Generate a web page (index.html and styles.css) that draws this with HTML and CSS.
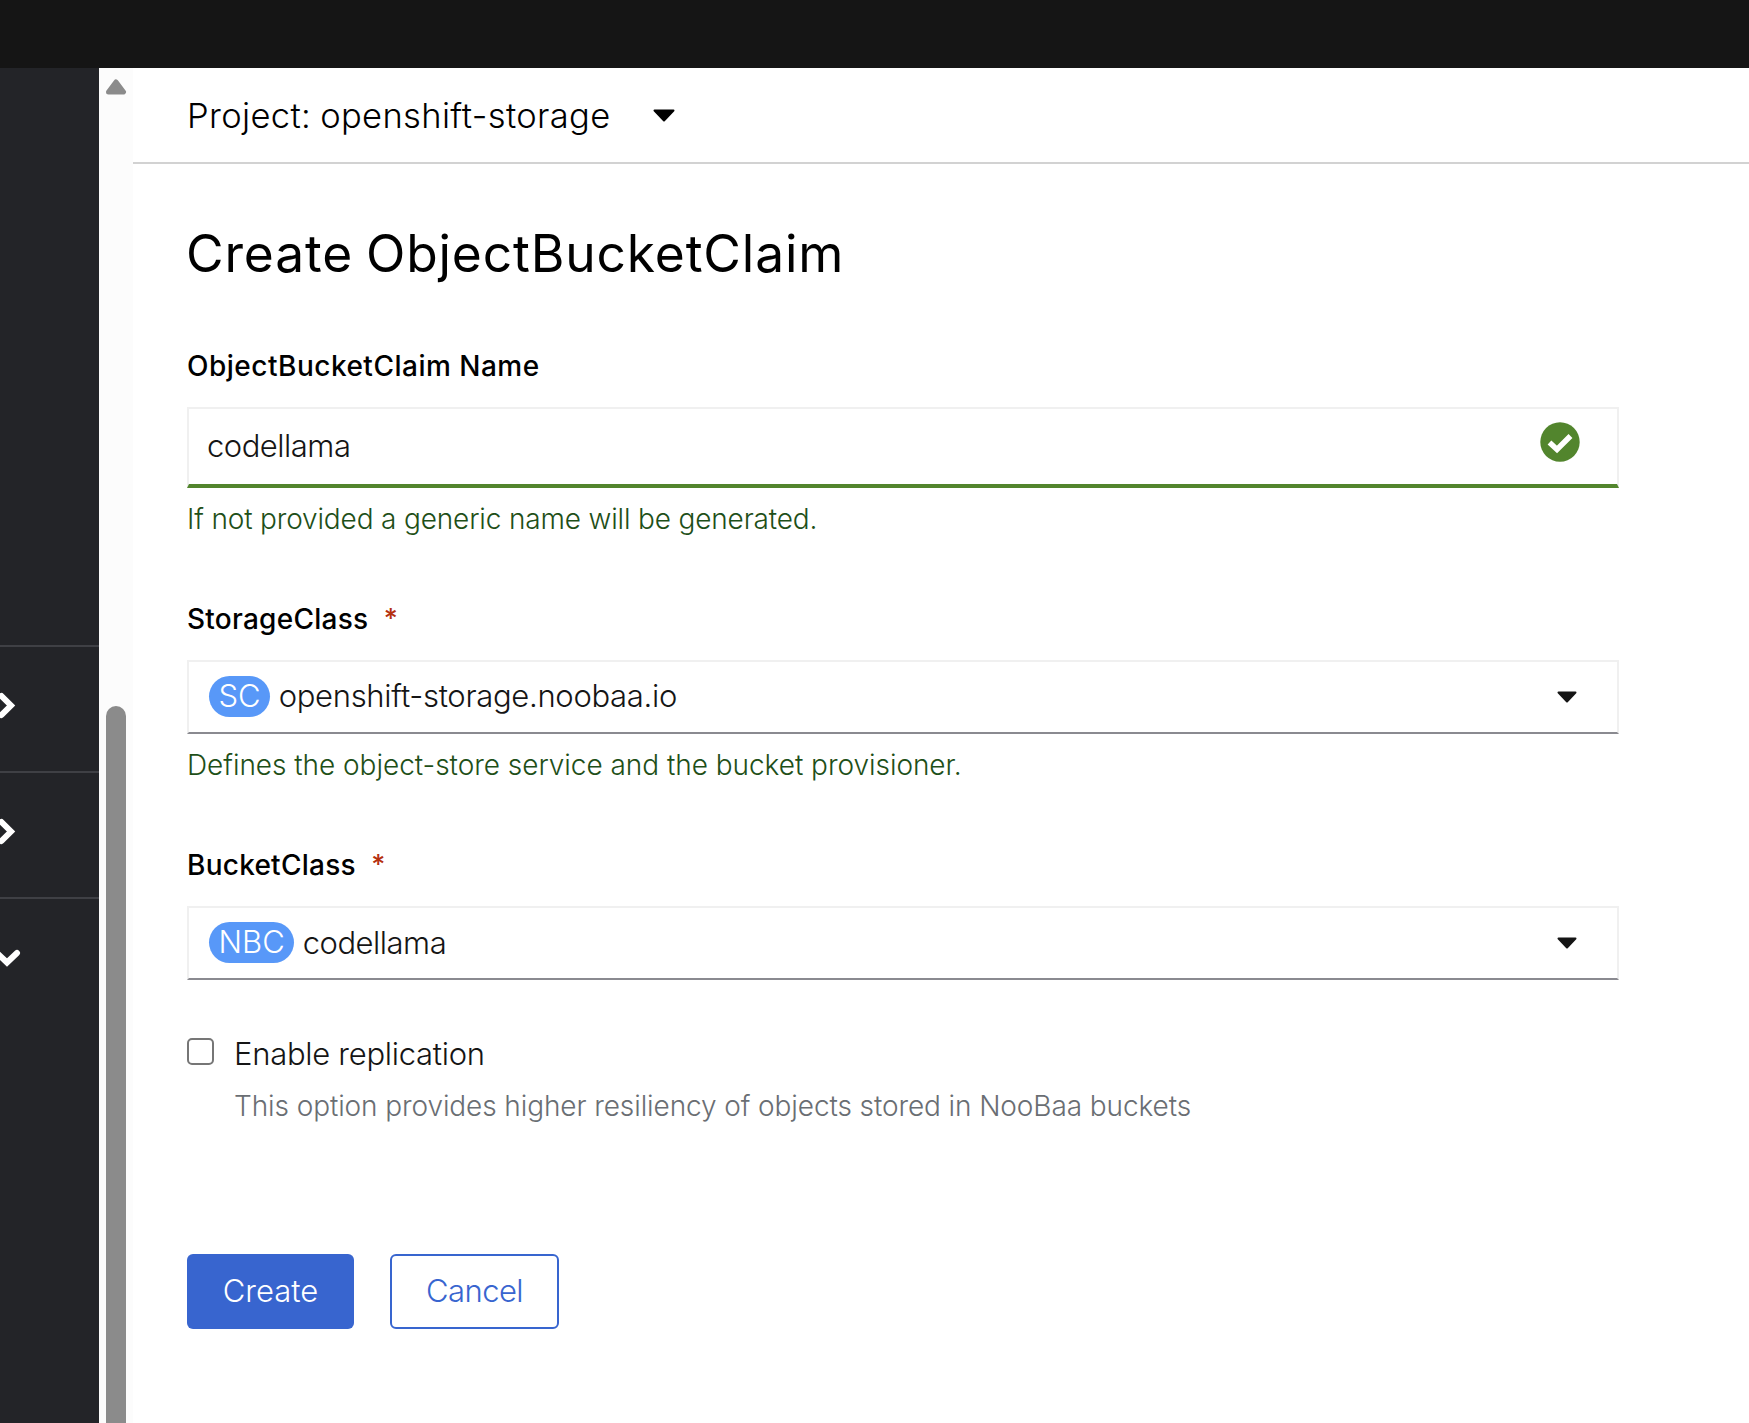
FILE: index.html
```html
<!DOCTYPE html>
<html lang="en">
<head>
<meta charset="utf-8">
<title>Create ObjectBucketClaim</title>
<link rel="stylesheet" href="styles.css">
</head>
<body>
<div class="masthead"></div>
<div class="shell">
  <nav class="sidebar">
    <div class="nav-spacer"></div>
    <div class="nav-item"><svg class="chevron" viewBox="0 0 22 32"><path d="M1.500 7 L11 16.500 L1.500 26"/></svg></div>
    <div class="nav-item"><svg class="chevron" viewBox="0 0 22 32"><path d="M1.500 7 L11 16.500 L1.500 26"/></svg></div>
    <div class="nav-item"><svg class="chevron" viewBox="0 0 22 32"><path d="M-3 12 L7 21.500 L17 12"/></svg></div>
  </nav>
  <div class="scrollbar">
    <svg class="scroll-up" viewBox="0 0 22 16"><path d="M11 3 L18.500 13 H3.500 Z"/></svg>
    <div class="thumb"></div>
  </div>
  <main class="main">
    <header class="project-bar">
      <span class="project">Project: openshift-storage</span>
      <svg class="caret-lg" viewBox="0 0 22 13"><path d="M1.500 1.500 H20.500 L11 11.500 Z"/></svg>
    </header>
    <form class="form">
      <h1 class="title">Create ObjectBucketClaim</h1>
      <div class="label label-wide">ObjectBucketClaim Name</div>
      <div class="input">
        <span class="value value-name">codellama</span>
        <svg class="check" viewBox="0 0 40 40"><circle cx="20" cy="20" r="19.700"/><path d="M9.500 20.500 L17 27.500 L30.500 14"/></svg>
      </div>
      <div class="helper helper-tight">If not provided a generic name will be generated.</div>
      <div class="label">StorageClass<span class="star">*</span></div>
      <div class="select">
        <span class="badge">SC</span><span class="value">openshift-storage.noobaa.io</span>
        <svg class="caret" viewBox="0 0 20 12"><path d="M1.500 1.500 H18.500 L10 10.500 Z"/></svg>
      </div>
      <div class="helper">Defines the object-store service and the bucket provisioner.</div>
      <div class="label">BucketClass<span class="star">*</span></div>
      <div class="select">
        <span class="badge">NBC</span><span class="value value-name">codellama</span>
        <svg class="caret" viewBox="0 0 20 12"><path d="M1.500 1.500 H18.500 L10 10.500 Z"/></svg>
      </div>
      <div class="check-row">
        <span class="box"></span>
        <div>
          <div class="check-label">Enable replication</div>
          <div class="desc">This option provides higher resiliency of objects stored in NooBaa buckets</div>
        </div>
      </div>
      <div class="actions">
        <div class="btn primary">Create</div>
        <div class="btn secondary">Cancel</div>
      </div>
    </form>
  </main>
</div>
</body>
</html>
```
FILE: styles.css
```css
* { box-sizing: border-box; }
body {
  margin: 0;
  height: 1423px;
  overflow: hidden;
  display: flex;
  flex-direction: column;
  background: #fff;
  color: #151515;
  font-family: Inter, "Open Sans", sans-serif;
  font-weight: 300;
}
svg { display: block; flex: none; }

/* Shell */
.masthead { height: 68px; flex: none; background: #151515; }
.shell { flex: 1; display: flex; min-height: 0; }
.sidebar { width: 99px; flex: none; background: #232428; overflow: hidden; }
.nav-spacer { height: 577px; }
.nav-item { height: 126px; border-top: 2px solid #3f4045; display: flex; align-items: flex-start; padding-top: 42px; }
.chevron { width: 22px; height: 32px; fill: none; stroke: #fff; stroke-width: 6; stroke-linecap: round; stroke-linejoin: miter; }
.scrollbar { width: 34px; flex: none; background: #fcfcfc; display: flex; flex-direction: column; align-items: center; padding-top: 11px; }
.scroll-up { width: 22px; height: 16px; fill: #8b8b8b; stroke: #8b8b8b; stroke-width: 5; stroke-linejoin: round; }
.thumb { width: 20px; flex: 1; margin-top: 611px; background: #8b8b8b; border-radius: 10px 10px 0 0; }
.main { flex: 1; min-width: 0; }

/* Project selector */
.project-bar { height: 96px; border-bottom: 2px solid #d2d2d2; padding-left: 54px; display: flex; align-items: center; color: #000; }
.project { font-size: 34.5px; letter-spacing: 0.35px; word-spacing: -1px; }
.caret-lg { width: 22px; height: 13px; margin-left: 42px; fill: #000; stroke: #000; stroke-width: 2; stroke-linejoin: round; }

/* Form */
.form { padding: 58px 130px 0 54px; }
.title { margin: 0 0 61px -1px; font-size: 51.5px; line-height: 62px; font-weight: 400; letter-spacing: 0.85px; word-spacing: -2.5px; color: #000; }
.label { display: flex; font-size: 28px; line-height: 42px; font-weight: 500; letter-spacing: 0.25px; color: #000; margin-bottom: 20px; }
.label-wide { letter-spacing: 0.5px; }
.star { margin-left: 15.5px; color: #b5300f; font-size: 27px; line-height: 42px; }
.input, .select { display: flex; align-items: center; border: 2px solid #f0f0f0; font-size: 31px; line-height: 44px; margin-bottom: 10px; }
.input { height: 81px; border-bottom: 4px solid #52852d; padding: 0 37px 2px 18px; justify-content: space-between; }
.select { height: 74px; border-bottom-color: #8a8a90; padding: 0 40px 0 20px; }
.value { letter-spacing: -0.31px; }
.value-name { letter-spacing: -0.5px; }
.select .value { margin-left: 8.5px; padding-bottom: 3px; }
.select .value-name { padding-bottom: 1px; }
.check { width: 40px; height: 40px; margin-top: -7px; }
.check circle { fill: #52852d; }
.check path { fill: none; stroke: #fff; stroke-width: 5.5; }
.caret { width: 20px; height: 12px; margin-left: auto; fill: #151515; stroke: #151515; stroke-width: 2; stroke-linejoin: round; }
.badge { height: 41px; margin-bottom: 1px; border-radius: 21px; background: #5898f8; color: #fff; padding: 0 9.5px; line-height: 39px; }
.helper { font-size: 28px; line-height: 42px; letter-spacing: -0.04px; color: #1e4f18; margin-bottom: 58px; }
.helper-tight { letter-spacing: -0.16px; }

/* Replication option */
.check-row { display: flex; margin-top: 50px; }
.box { width: 27px; height: 27px; margin: 8px 20px 0 0; border: 2px solid #767676; border-radius: 5px; }
.check-label { font-size: 31px; line-height: 48px; letter-spacing: -0.28px; }
.desc { font-size: 28px; line-height: 42px; letter-spacing: -0.1px; margin-top: 7px; color: #6a6e73; }

/* Actions */
.actions { display: flex; gap: 36px; margin-top: 127px; }
.btn { height: 75px; border-radius: 6px; font-size: 31px; line-height: 73px; text-align: center; }
.primary { width: 167px; background: #3865cf; color: #fff; }
.secondary { width: 169px; border: 2px solid #3865cf; color: #3865cf; line-height: 69px; letter-spacing: -0.56px; }
```
